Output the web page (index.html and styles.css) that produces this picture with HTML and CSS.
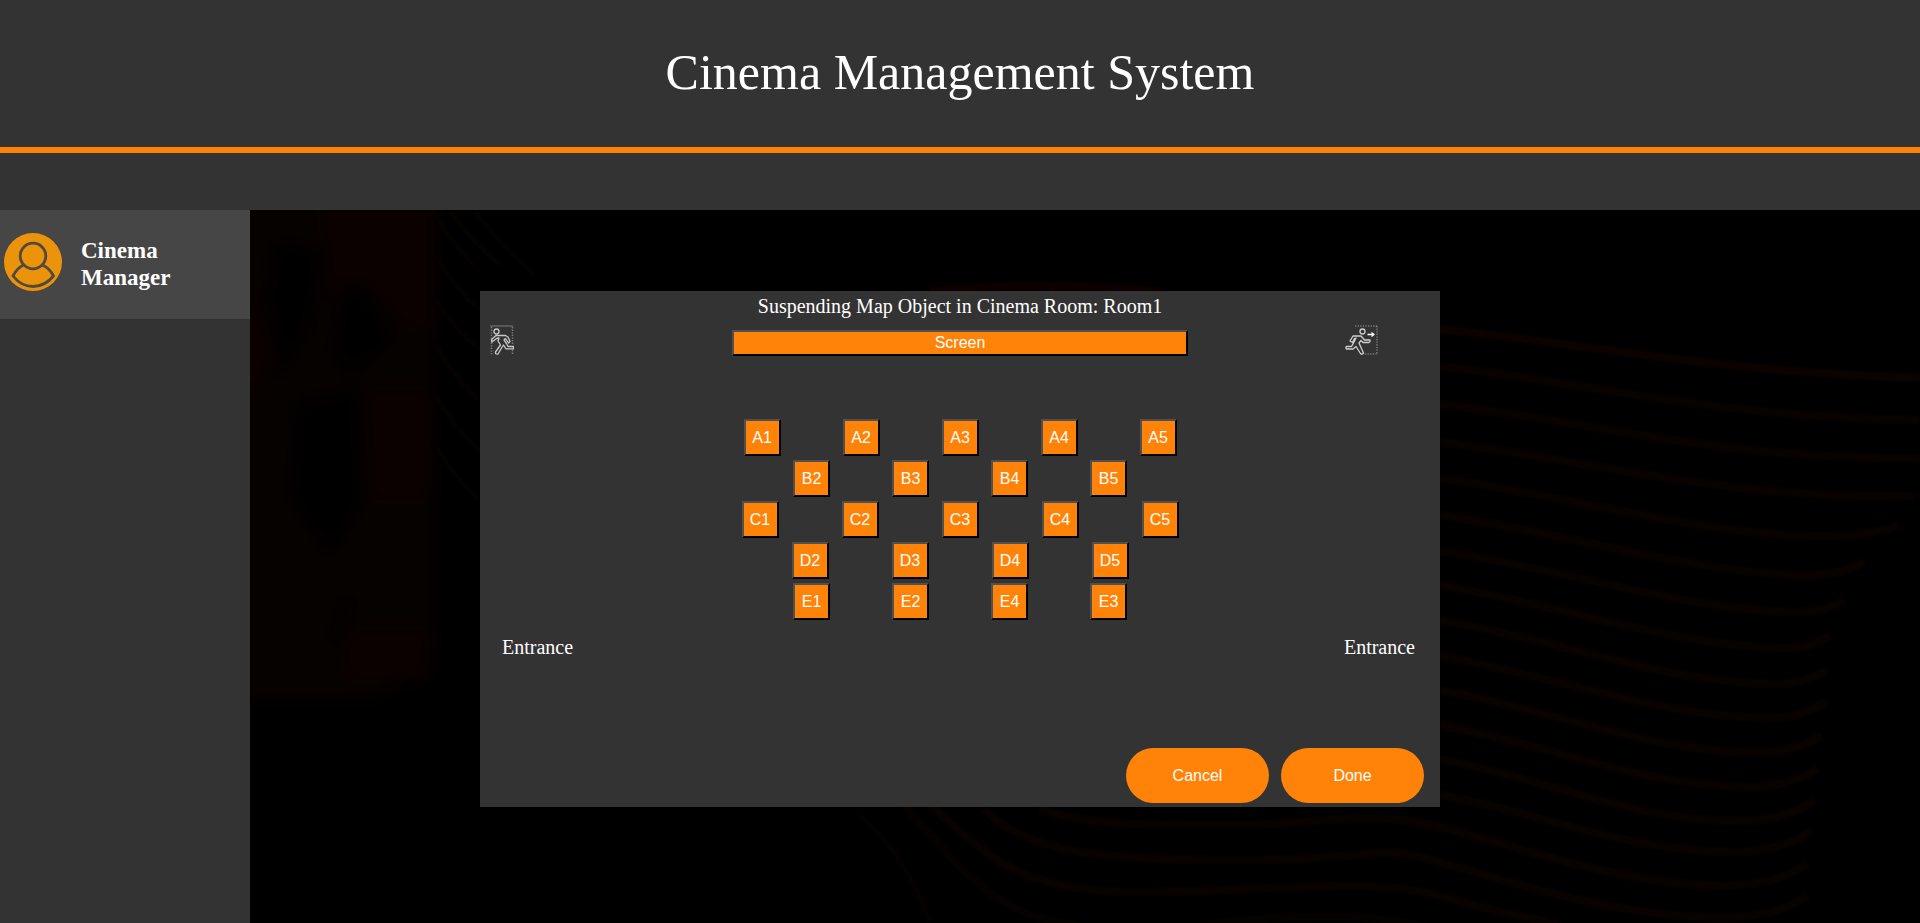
FILE: index.html
```html
<!DOCTYPE html>
<html lang="en">
<head>
<meta charset="utf-8">
<title>Cinema Management System</title>
<link rel="stylesheet" href="styles.css">
</head>
<body>
<div class="page">
  <header class="header"><h1 class="brand">Cinema Management System</h1></header>
  <nav class="navbar" aria-label="Main"></nav>
  <div class="body">
    <aside class="sidebar">
      <div class="user">
        <svg class="avatar" viewBox="0 0 58 58" aria-hidden="true">
          <circle cx="29" cy="29" r="29" fill="#ec930c"/>
          <g fill="none" stroke="#50493c" stroke-width="2.8">
            <circle cx="29" cy="23" r="12.800"/>
            <path d="M19.500 32C15 34 11.500 38 9 43C20 57 38 57 49.500 43C47 38 43 34 38.500 32" stroke-linejoin="round"/>
          </g>
        </svg>
        <h3 class="role">Cinema Manager</h3>
      </div>
    </aside>
    <main class="stage">
      <svg class="backdrop" viewBox="250 210 1670 713" preserveAspectRatio="xMidYMin slice" aria-hidden="true">
        <defs>
          <filter id="soft" x="-20%" y="-20%" width="140%" height="140%" color-interpolation-filters="sRGB"><feGaussianBlur stdDeviation="9"/></filter>
          <filter id="line" color-interpolation-filters="sRGB"><feGaussianBlur stdDeviation="1"/></filter>
        </defs>
        <g filter="url(#soft)">
          <path d="M230 190H434V650L380 700H230Z" fill="#060200"/>
          <path d="M320 200H436V335L405 325 370 285 330 300Z M365 390H432V500H370Z M230 290L275 330 265 380 230 400Z M345 630H430V680H345Z" fill="#0b0100"/>
          <path d="M275 240L325 250 310 330 280 380 265 300Z M345 280L370 290 395 340 350 380 330 350Z M295 400L360 390 365 500 330 560 290 500Z M345 590L355 600 340 650 332 640Z" fill="#010000"/>
        </g>
        <g filter="url(#line)" fill="none" stroke="#090300" stroke-width="8">
          <path d="M1440 329C1600 346 1720 372 1920 378" stroke="#0c0300"/>
          <path d="M1440 366C1580 382 1720 418 1920 420"/>
          <path d="M1440 404C1580 420 1720 460 1920 458"/>
          <path d="M1440 442C1580 458 1720 500 1915 496"/>
          <path d="M1440 478C1570 496 1700 536 1827 536Q1870 536 1900 525"/>
          <path d="M1440 515C1570 534 1700 575 1810 575Q1840 575 1865 562"/>
          <path d="M1440 551C1570 570 1690 612 1800 612Q1828 611 1845 600"/>
          <path d="M1440 585C1570 607 1680 648 1790 648Q1815 647 1830 636"/>
          <path d="M1440 620C1570 643 1670 684 1780 684Q1810 682 1825 670"/>
          <path d="M1440 656C1560 677 1660 718 1775 718Q1808 715 1825 702"/>
          <path d="M1440 690C1560 712 1650 753 1765 753Q1802 750 1822 735"/>
          <path d="M1440 725C1560 747 1640 787 1755 787Q1798 784 1818 768"/>
          <path d="M1440 759C1560 782 1630 821 1745 821Q1792 818 1815 800"/>
          <path d="M1440 795C1550 814 1620 852 1740 852Q1788 849 1812 830"/>
          <path d="M1040 808C1080 826 1150 825 1236 825S1360 808 1440 827S1620 886 1730 886Q1782 882 1808 864"/>
          <path d="M984 810C1030 850 1080 860 1236 860S1370 842 1440 862S1620 918 1730 918Q1782 914 1808 896"/>
          <path d="M930 805C985 850 1010 892 1136 892S1370 876 1440 896 1520 915 1560 925"/>
          <path d="M905 805C960 870 1000 920 1080 925M1200 925C1300 914 1370 912 1440 930" stroke="#060200"/>
          <path d="M930 291C1000 284 1080 284 1160 291" stroke="#0c0100"/>
        </g>
        <g filter="url(#line)" fill="none" stroke="#050200" stroke-width="5">
          <path d="M436 215Q455 250 480 270M450 211Q470 240 500 265M475 211Q500 245 535 275M436 255Q455 290 480 310M436 300Q455 330 480 350M436 345Q455 380 480 400M436 395Q455 430 480 450M436 445Q455 480 480 500M860 815Q910 860 930 923"/>
        </g>
      </svg>
    </main>
  </div>
</div>
<div class="overlay">
  <section class="dialog" role="dialog" aria-labelledby="dialog-title">
    <h2 class="dialog-title" id="dialog-title">Suspending Map Object in Cinema Room: Room1</h2>
    <div class="front">
      <svg class="door-in" viewBox="0 0 24 30" aria-label="Exit">
        <g fill="none" stroke="#7c7c7c"><path d="M0 1H23"/><path d="M1.500 2V30M22.500 2V19M22.500 25V30" stroke-width="1.500" stroke-dasharray="1.300 1.300"/></g>
        <g fill="none" stroke="#c8c8c8" stroke-width="1.300" stroke-linejoin="round">
          <circle cx="6.500" cy="6.500" r="2.500"/>
          <path d="M2 17L1.500 14.500 6 10.500H15.500L18 12 20 16.500 18.500 18 15.500 13.500 14 15 16.500 18.500 18 21.500H23.500V23.800H16L13.500 20 11.500 23 8 29Q5 29.500 5.500 27L10.500 20 8 16 9 13 6.500 13.500Z"/>
        </g>
      </svg>
      <button class="screen" type="button">Screen</button>
      <svg class="door-out" viewBox="0 0 34 30" aria-label="Exit">
        <path d="M10 1H32M32 1V29M20 29H32" fill="none" stroke="#9a9a9a" stroke-dasharray="1.300 1.300"/>
        <g fill="none" stroke="#d0d0d0" stroke-width="1.300" stroke-linejoin="round">
          <circle cx="17.500" cy="6.500" r="2.500"/>
          <path d="M5 16L8 11H16L19.500 15H25Q25.500 17 24 17.500H18L16 15.500 14 18 18.500 28Q17 30 15.500 28.500L11 21.500 8 24H1.500Q0 22 2 21.500H6.500L9 17 11 13 9.500 13.500 7.500 17.500Z"/>
          <path d="M22.500 9.500H29M26.500 7.500L29 9.500 26.500 11.500" stroke="#fff"/>
        </g>
      </svg>
    </div>
    <div class="seats">
      <div class="row"><button class="seat" type="button">A1</button><button class="seat" type="button">A2</button><button class="seat" type="button">A3</button><button class="seat" type="button">A4</button><button class="seat" type="button">A5</button></div>
      <div class="row"><button class="seat" type="button">B2</button><button class="seat" type="button">B3</button><button class="seat" type="button">B4</button><button class="seat" type="button">B5</button></div>
      <div class="row row-wide"><button class="seat" type="button">C1</button><button class="seat" type="button">C2</button><button class="seat" type="button">C3</button><button class="seat" type="button">C4</button><button class="seat" type="button">C5</button></div>
      <div class="row row-wide"><button class="seat" type="button">D2</button><button class="seat" type="button">D3</button><button class="seat" type="button">D4</button><button class="seat" type="button">D5</button></div>
      <div class="row"><button class="seat" type="button">E1</button><button class="seat" type="button">E2</button><button class="seat" type="button">E4</button><button class="seat" type="button">E3</button></div>
    </div>
    <div class="entrances"><span>Entrance</span><span>Entrance</span></div>
    <div class="actions">
      <button class="action" type="button">Cancel</button>
      <button class="action" type="button">Done</button>
    </div>
  </section>
</div>
</body>
</html>
```
FILE: styles.css
```css
* { box-sizing: border-box; }
body {
  margin: 0;
  background: #000;
  color: #fff;
  font-family: "Liberation Serif", "Times New Roman", serif;
  font-size: 20px;
}
h1, h2, h3 { margin: 0; }
button {
  font-family: "Liberation Sans", Arial, sans-serif;
  font-size: 16px;
  color: #fff;
  background: #ff8308;
  cursor: pointer;
}
.page { display: flex; flex-direction: column; min-height: 100vh; }
.header {
  padding: 44px 16px 46px;
  background: #333;
  border-bottom: 6px solid #ff8308;
  text-align: center;
}
.brand { font-size: 50px; font-weight: 400; line-height: 57px; }
.navbar { height: 57px; background: #333; }
.body { display: flex; flex: 1; }
.sidebar { flex: 0 0 250px; background: #333; }
.user {
  display: flex;
  align-items: center;
  gap: 19px;
  padding: 23px 80px 28px 4px;
  background: #464646;
}
.avatar { flex: none; width: 58px; height: 58px; }
.role { font-size: 23px; line-height: 27px; padding-top: 4px; }
.stage { position: relative; flex: 1; overflow: hidden; background: #000; }
.backdrop { position: absolute; inset: 0; width: 100%; height: 100%; }
.overlay {
  position: fixed;
  inset: 0;
  display: flex;
  justify-content: center;
  align-items: flex-start;
  padding-top: 291px;
}
.dialog { width: 50%; background: #333; }
.dialog-title {
  padding-top: 4px;
  font-size: 20px;
  font-weight: 400;
  line-height: 23px;
  text-align: center;
}
.front {
  display: grid;
  grid-template-columns: 242px 1fr 191px;
  align-items: start;
  padding: 7px 61px 0 10px;
}
.door-in { width: 24px; height: 30px; }
.door-out { width: 34px; height: 30px; justify-self: end; }
.screen, .seat {
  border: 2px solid;
  border-color: #505050 #000 #000 #505050;
  padding: 0;
}
.screen { height: 26px; margin-top: 5px; line-height: 18px; }
.seats { display: flex; flex-direction: column; gap: 4px; padding-top: 63px; }
.row { display: flex; justify-content: center; gap: 62px; }
.row-wide { gap: 63px; }
.seat { width: 37px; height: 37px; }
.entrances {
  display: flex;
  justify-content: space-between;
  padding: 16px 25px 0 22px;
  line-height: 23px;
}
.actions {
  display: flex;
  justify-content: flex-end;
  gap: 12px;
  padding: 89px 16px 4px;
}
.action { width: 143px; height: 55px; border: 0; border-radius: 28px; }
```
